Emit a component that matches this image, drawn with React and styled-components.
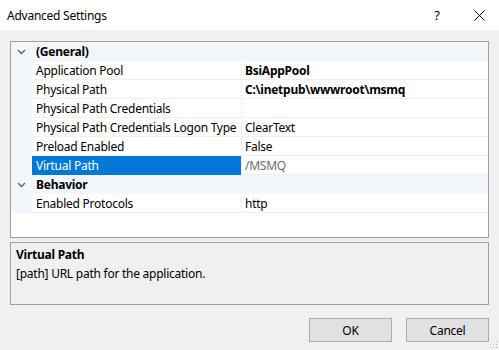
import React from 'react'
import styled, { createGlobalStyle } from "styled-components";

const Global = createGlobalStyle`
    html, body {
        margin: 0;
        padding: 0;
        background: #f0f0f0;
    }
    body {
        font-family: "Noto Sans", "Open Sans", sans-serif;
        font-size: 12px;
        letter-spacing: -0.25px;
        color: #000;
    }
`;

const Window = styled.div`
    width: 499px;
    height: 350px;
    display: flex;
    flex-direction: column;
    background: #f0f0f0;
    position: relative;
    overflow: hidden;
`;

const TitleBar = styled.div`
    height: 30px;
    background: #fff;
    display: flex;
    align-items: center;
    padding-left: 7px;
`;

const Title = styled.div`
    flex: 1;
    font-size: 12px;
`;

const TitleBtn = styled.div`
    width: ${p => p.w}px;
    height: 30px;
    display: flex;
    align-items: center;
    justify-content: center;
    font-size: 13px;
`;

const Body = styled.div`
    padding: 11px 10px 0 10px;
    display: flex;
    flex-direction: column;
`;

const Grid = styled.div`
    height: 195px;
    border: 1px solid #a0a0a0;
    background: #fff;
`;

const Row = styled.div`
    display: grid;
    grid-template-columns: 21px 209px 1px 1fr;
    height: 19px;
    background: ${p => (p.header ? "#f3f6fb" : "#fff")};
`;

const Gutter = styled.div`
    background: #f3f6fb;
    display: flex;
    align-items: center;
    justify-content: center;
`;

const Name = styled.div`
    padding-left: 4px;
    line-height: 19px;
    height: 18px;
    overflow: hidden;
    border-bottom: 1px solid #f0f0f0;
    white-space: nowrap;
    background: ${p => (p.selected ? "#0078d7" : "transparent")};
    color: ${p => (p.selected ? "#fff" : "#000")};
    border-color: ${p => (p.selected ? "#0078d7" : "#f0f0f0")};
`;

const Divider = styled.div`
    background: #f0f0f0;
`;

const Value = styled.div`
    padding-left: 3px;
    line-height: 19px;
    height: 18px;
    overflow: hidden;
    border-bottom: 1px solid #f0f0f0;
    white-space: nowrap;
    font-weight: ${p => (p.bold ? 700 : 400)};
    color: ${p => (p.muted ? "#6d6d6d" : "#000")};
`;

const HeaderLabel = styled.div`
    grid-column: 2 / 5;
    padding-left: 4px;
    line-height: 19px;
    font-weight: 700;
`;

const Description = styled.div`
    margin-top: 4px;
    height: 57px;
    border: 1px solid #a0a0a0;
    padding: 2px 5px;
    line-height: 19px;
`;

const DescTitle = styled.div`
    font-weight: 700;
`;

const Buttons = styled.div`
    display: flex;
    justify-content: flex-end;
    gap: 14px;
    margin-top: 13px;
`;

const Button = styled.button`
    width: 83px;
    height: 24px;
    background: #e1e1e1;
    border: 1px solid #adadad;
    font-family: inherit;
    font-size: 12px;
    letter-spacing: inherit;
    color: #000;
    padding: 0;
`;

const Grip = styled.svg`
    position: absolute;
    right: 1px;
    bottom: 1px;
`;

const Chevron = () => (
  <svg width="9" height="6" viewBox="0 0 9 6">
    <path d="M1 1 L4.5 4.5 L8 1" fill="none" stroke="#606060" strokeWidth="1.3" />
  </svg>
)

const props = [
  { name: "Application Pool", value: "BsiAppPool", bold: true },
  { name: "Physical Path", value: "C:\\inetpub\\wwwroot\\msmq", bold: true },
  { name: "Physical Path Credentials", value: "" },
  { name: "Physical Path Credentials Logon Type", value: "ClearText" },
  { name: "Preload Enabled", value: "False" },
  { name: "Virtual Path", value: "/MSMQ", selected: true, muted: true },
]

const Prop = ({ p }) => (
  <Row>
    <Gutter />
    <Name selected={p.selected}>{p.name}</Name>
    <Divider />
    <Value bold={p.bold} muted={p.muted}>{p.value}</Value>
  </Row>
)

const Header = ({ label }) => (
  <Row header>
    <Gutter><Chevron /></Gutter>
    <HeaderLabel>{label}</HeaderLabel>
  </Row>
)

export default function App() {
  return (
    <Window>
      <Global />
      <TitleBar>
        <Title>Advanced Settings</Title>
        <TitleBtn w={44}>?</TitleBtn>
        <TitleBtn w={40}>
          <svg width="11" height="11" viewBox="0 0 11 11">
            <path d="M0.5 0.5 L10.5 10.5 M10.5 0.5 L0.5 10.5" stroke="#000" strokeWidth="1" />
          </svg>
        </TitleBtn>
      </TitleBar>
      <Body>
        <Grid>
          <Header label="(General)" />
          {props.map(p => <Prop key={p.name} p={p} />)}
          <Header label="Behavior" />
          <Prop p={{ name: "Enabled Protocols", value: "http" }} />
        </Grid>
        <Description>
          <DescTitle>Virtual Path</DescTitle>
          <div>[path] URL path for the application.</div>
        </Description>
        <Buttons>
          <Button>OK</Button>
          <Button>Cancel</Button>
        </Buttons>
      </Body>
      <Grip width="8" height="8" viewBox="0 0 8 8">
        <rect x="6" y="0" width="1" height="1" fill="#b8b8b8" />
        <rect x="3" y="3" width="1" height="1" fill="#b8b8b8" />
        <rect x="6" y="3" width="1" height="1" fill="#b8b8b8" />
        <rect x="0" y="6" width="1" height="1" fill="#b8b8b8" />
        <rect x="3" y="6" width="1" height="1" fill="#b8b8b8" />
        <rect x="6" y="6" width="1" height="1" fill="#b8b8b8" />
      </Grip>
    </Window>
  )
}
